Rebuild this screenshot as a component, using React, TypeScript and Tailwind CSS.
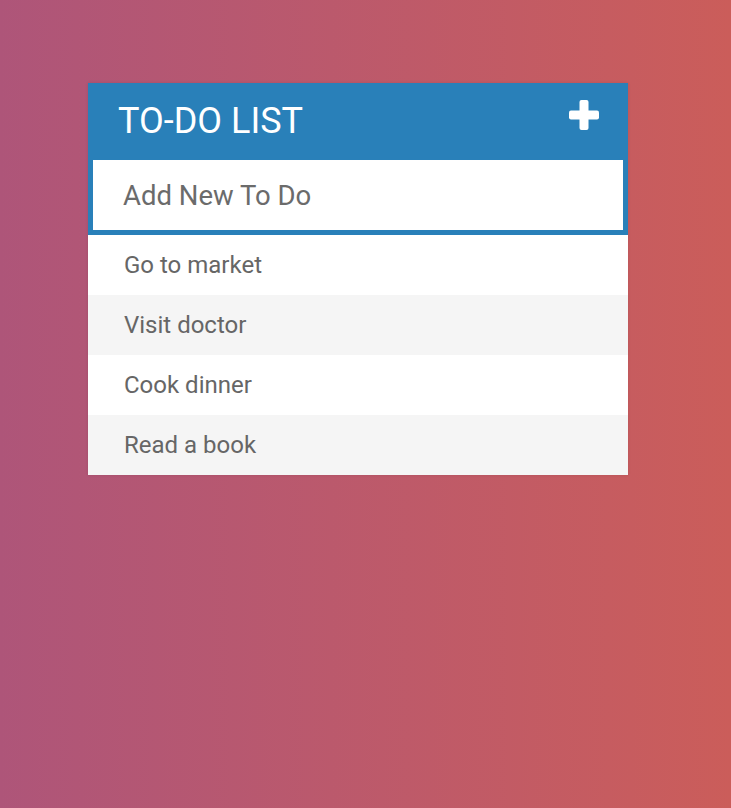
const todos = ['Go to market', 'Visit doctor', 'Cook dinner', 'Read a book'];

function PlusIcon() {
  return (
    <svg width="30" height="30" viewBox="0 0 30 30" fill="white">
      <rect x="10.5" y="0" width="9" height="30" rx="2" />
      <rect x="0" y="10.5" width="30" height="9" rx="2" />
    </svg>
  );
}

export default function App() {
  return (
    <div
      className="min-h-screen w-full bg-linear-to-r from-[#ae5579] to-[#cb5d5a] pt-[83px] pl-[88px]"
      style={{ fontFamily: 'Roboto, "Liberation Sans", sans-serif' }}
    >
      <div className="w-[540px] bg-[#f7f7f7] shadow-[0_0_3px_rgba(0,0,0,0.1)]">
        {/* Header */}
        <div className="h-[77px] bg-[#2980b9] flex items-start justify-between pl-[30px] pr-[29px]">
          <h1 className="mt-[20px] text-[36px] font-normal text-white uppercase leading-none">To-Do List</h1>
          <div className="mt-[17px]">
            <PlusIcon />
          </div>
        </div>

        <input
          autoFocus
          type="text"
          placeholder="Add New To Do"
          className="block w-full h-[75px] bg-white border-[5px] border-t-0 border-[#2980b9] pl-[30px] pr-4 text-[27.5px] text-[#2980b9] placeholder:text-[#6b6b6b] outline-none"
        />

        <ul>
          {todos.map((t, i) => (
            <li
              key={t}
              className={`h-[60px] flex items-center pl-[36px] text-[24px] text-[#666] ${
                i % 2 === 1 ? 'bg-[#f5f5f5]' : 'bg-white'
              }`}
            >
              {t}
            </li>
          ))}
        </ul>
      </div>
    </div>
  );
}
